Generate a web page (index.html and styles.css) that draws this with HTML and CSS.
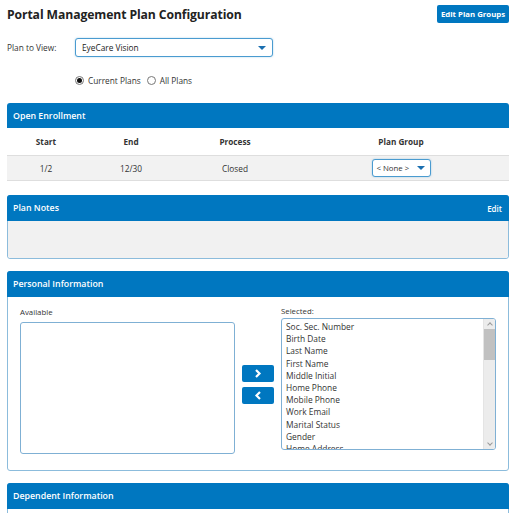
FILE: index.html
```html
<!DOCTYPE html>
<html>
<head>
<meta charset="utf-8">
<link rel="stylesheet" href="styles.css">
</head>
<body>
<div class="page">
  <div class="top">
    <h1 class="title">Portal Management Plan Configuration</h1>
    <button class="btn-primary">Edit Plan Groups</button>
  </div>
  <div class="plan-row">
    <span class="plan-label">Plan to View:</span>
    <div class="select plan-select"><span>EyeCare Vision</span><span class="caret"></span></div>
  </div>
  <div class="radios">
    <span class="radio checked"></span><span class="radio-text">Current Plans</span>
    <span class="radio"></span><span class="radio-text">All Plans</span>
  </div>

  <section class="panel enroll">
    <div class="panel-head"><span>Open Enrollment</span></div>
    <div class="grid grid-head">
      <div>Start</div><div>End</div><div>Process</div><div>Plan Group</div>
    </div>
    <div class="grid grid-row">
      <div>1/2</div><div>12/30</div><div>Closed</div>
      <div><div class="select group-select"><span>&lt; None &gt;</span><span class="caret"></span></div></div>
    </div>
  </section>

  <section class="panel bordered notes">
    <div class="panel-head"><span>Plan Notes</span><span class="head-link">Edit</span></div>
    <div class="notes-body"></div>
  </section>

  <section class="panel bordered personal">
    <div class="panel-head"><span>Personal Information</span></div>
    <div class="picker">
      <div class="col avail">
        <div class="col-label">Available</div>
        <div class="listbox avail-box"></div>
      </div>
      <div class="movers">
        <button class="mover"><svg width="8" height="9" viewBox="0 0 8 9"><path d="M2 1 L5.5 4.5 L2 8" fill="none" stroke="#fff" stroke-width="2.2"/></svg></button>
        <button class="mover"><svg width="8" height="9" viewBox="0 0 8 9"><path d="M6 1 L2.5 4.5 L6 8" fill="none" stroke="#fff" stroke-width="2.2"/></svg></button>
      </div>
      <div class="col sel">
        <div class="col-label">Selected:</div>
        <div class="listbox sel-box">
          <ul class="items">
            <li>Soc. Sec. Number</li>
            <li>Birth Date</li>
            <li>Last Name</li>
            <li>First Name</li>
            <li>Middle Initial</li>
            <li>Home Phone</li>
            <li>Mobile Phone</li>
            <li>Work Email</li>
            <li>Marital Status</li>
            <li>Gender</li>
            <li>Home Address</li>
          </ul>
          <div class="scrollbar">
            <span class="arrow up"></span>
            <span class="thumb"></span>
            <span class="arrow down"></span>
          </div>
        </div>
      </div>
    </div>
  </section>

  <section class="panel bordered dependent">
    <div class="panel-head"><span>Dependent Information</span></div>
  </section>
</div>
</body>
</html>
```

FILE: styles.css
```css
* { box-sizing: border-box; }
html, body { margin: 0; padding: 0; background: #fff; }
body {
  font-family: "Open Sans", "Noto Sans", sans-serif;
  font-size: 8.5px;
  color: #333;
  overflow: hidden;
}
.page { padding: 5px 6px 0 7px; width: 515px; }

.top { display: flex; justify-content: space-between; align-items: flex-start; height: 33px; }
.title {
  margin: 0; padding-top: 1px;
  font-size: 12.2px; font-weight: 700; color: #222;
  letter-spacing: -0.1px;
}
.btn-primary {
  background: #0077c0; color: #fff; border: none; border-radius: 2px;
  font-family: "Open Sans", sans-serif; font-weight: 700; font-size: 7.8px;
  width: 72px; height: 18px; padding: 0; margin-right: 0;
}

.plan-row { display: flex; align-items: center; height: 19px; }
.plan-label { width: 68px; font-size: 8.3px; color: #333; }
.select {
  display: flex; align-items: center; justify-content: space-between;
  border: 1px solid #4a9bd0; border-radius: 3px; background: #fff;
  box-shadow: 0 0 2px rgba(0,119,192,.35);
}
.plan-select { width: 198px; height: 19px; padding: 0 6px 0 6px; font-size: 8.3px; color: #222; }
.caret {
  width: 0; height: 0;
  border-left: 4px solid transparent; border-right: 4px solid transparent;
  border-top: 4px solid #1a6fb0;
}

.radios { display: flex; align-items: center; height: 13px; margin: 17px 0 0 68px; }
.radio {
  width: 9px; height: 9px; border: 1px solid #777; border-radius: 50%;
  display: inline-flex; align-items: center; justify-content: center; background: #fff;
}
.radio.checked::after { content: ""; width: 5px; height: 5px; border-radius: 50%; background: #111; }
.radio-text { margin: 0 6px 0 4px; font-size: 8.3px; color: #333; }

.panel { width: 502px; }
.panel-head {
  background: #0077c0; color: #fff; height: 26px;
  display: flex; align-items: center; justify-content: space-between;
  padding: 0 6px; font-weight: 600; font-size: 8.8px;
  border-radius: 3px 3px 0 0;
}
.head-link { font-weight: 600; font-size: 8px; padding-right: 1px; }
.bordered { border: 1px solid #8cbcdc; border-radius: 3px; }
.bordered .panel-head { margin: -1px -1px 0 -1px; }

.enroll { margin-top: 16px; }
.enroll .panel-head { height: 25px; }
.grid { display: grid; grid-template-columns: 78px 92px 116px 216px; align-items: center; text-align: center; }
.grid-head { height: 27px; font-weight: 700; font-size: 8.2px; color: #333; }
.grid-row {
  height: 26px; background: #f2f2f2; border-top: 1px solid #dedede; border-bottom: 1px solid #dedede;
  font-size: 8.3px;
}
.grid-row > div:last-child { display: flex; justify-content: center; }
.group-select { width: 59px; height: 18px; padding: 0 5px 0 4px; font-size: 7.8px; }

.notes { margin-top: 14px; height: 64px; }
.notes-body { background: #f1f1f1; height: 37px; border-radius: 0 0 3px 3px; }

.personal { margin-top: 12px; height: 200px; }
.picker { display: flex; padding: 10px 12px 0 12px; }
.col-label { font-size: 7.8px; color: #333; height: 9px; line-height: 9px; }
.avail .col-label { margin-top: 1px; margin-bottom: 5px; }
.listbox { border: 1px solid #7fb0d4; border-radius: 3px; background: #fff; }
.avail-box { width: 215px; height: 132px; }
.movers { display: flex; flex-direction: column; gap: 5px; margin: 58px 7px 0 7px; }
.mover {
  width: 32px; height: 17px; background: #0077c0; border: none; border-radius: 2px;
  display: flex; align-items: center; justify-content: center; padding: 0;
}
.sel .col-label { margin-bottom: 2px; }
.sel-box { width: 215px; height: 132px; display: flex; overflow: hidden; }
.items {
  list-style: none; margin: 0; padding: 2px 0 0 4px; flex: 1;
  font-size: 8.4px; line-height: 12.2px; color: #333;
}
.scrollbar {
  width: 12px; background: #ececec; display: flex; flex-direction: column; align-items: center;
  border-left: 1px solid #e4e4e4;
}
.arrow { width: 12px; height: 10px; position: relative; }
.arrow::after {
  content: ""; position: absolute; left: 4px; width: 3px; height: 3px;
  border-left: 1px solid #999; border-top: 1px solid #999;
}
.arrow.up::after { top: 4px; transform: rotate(45deg); }
.arrow.down { margin-top: auto; }
.arrow.down::after { top: 2px; transform: rotate(225deg); }
.thumb { width: 11px; height: 31px; background: #c1c1c1; }

.dependent { margin-top: 12px; height: 40px; }
```
